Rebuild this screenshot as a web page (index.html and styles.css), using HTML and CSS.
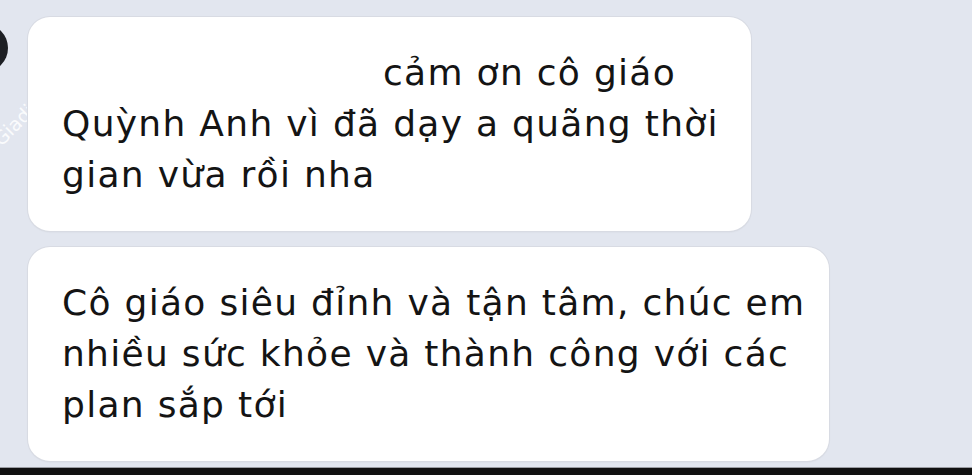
FILE: index.html
```html
<!DOCTYPE html>
<html lang="vi">
<head>
    <meta charset="UTF-8">
    <meta name="viewport" content="width=device-width, initial-scale=1.0">
    <title>Tin nhắn</title>
    <link rel="stylesheet" href="styles.css">
</head>
<body>
    <div id="chat">
        <div class="avatar"></div>
        <div class="watermark">Giadinhmoi.net</div>
        <div class="bubble first">
            <p class="indent">cảm ơn cô giáo<br>Quỳnh Anh vì đã dạy a quãng thời<br>gian vừa rồi nha</p>
        </div>
        <div class="bubble second">
            <p>Cô giáo siêu đỉnh và tận tâm, chúc em<br>nhiều sức khỏe và thành công với các<br>plan sắp tới</p>
        </div>
    </div>
    <div id="homeBar"></div>
</body>
</html>
```

FILE: styles.css
```css
body {
    margin: 0;
    padding: 0;
    background-color: #e2e6ef;
    font-family: "DejaVu Sans", "Liberation Sans", sans-serif;
    color: #141414;
    height: 475px;
    overflow: hidden;
    display: flex;
    flex-direction: column;
}

#chat {
    position: relative;
    flex: 1;
    display: flex;
    flex-direction: column;
    align-items: flex-start;
    gap: 16px;
    padding: 17px 0 0 28px;
}

.avatar {
    position: absolute;
    left: -40px;
    top: 24px;
    width: 48px;
    height: 48px;
    border-radius: 50%;
    background-color: #1d1f24;
}

.watermark {
    position: absolute;
    left: 4px;
    top: 128px;
    font-size: 19px;
    color: rgba(255, 255, 255, 0.85);
    transform: rotate(-45deg);
    transform-origin: left bottom;
}

.bubble {
    position: relative;
    background-color: #fff;
    border-radius: 22px;
    box-shadow: 0 0 0 1px #d8dbe3, 0 1px 2px rgba(0, 0, 0, 0.08);
    padding: 30px 0 33px 34px;
    box-sizing: border-box;
    height: 214px;
}

.first {
    width: 723px;
}

.second {
    width: 801px;
}

.bubble p {
    margin: 0;
    font-size: 36px;
    line-height: 51px;
    letter-spacing: 1.3px;
    white-space: nowrap;
}

.indent {
    text-indent: 321px;
}

#homeBar {
    height: 7px;
    background-color: #111;
    border-top: 1px solid #9a9ca2;
}
```
